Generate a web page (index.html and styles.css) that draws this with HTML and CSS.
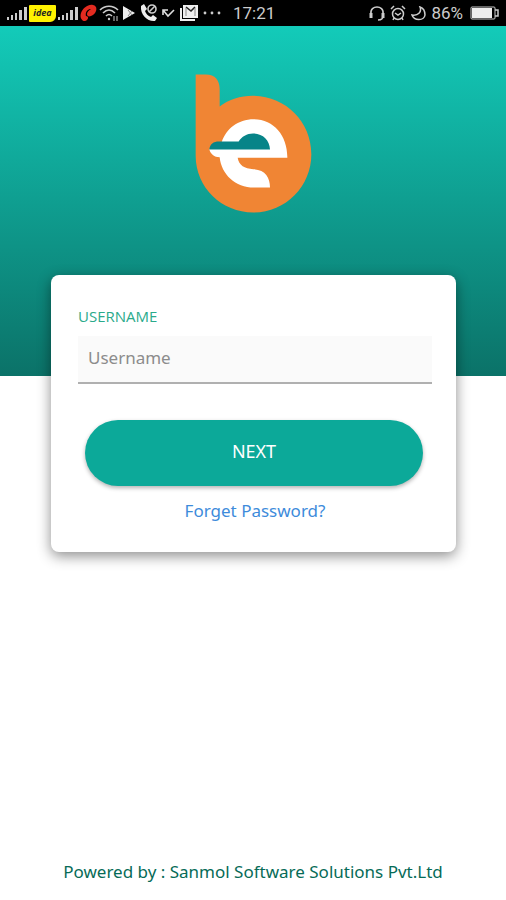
FILE: index.html
```html
<!DOCTYPE html>
<html lang="en">
<head>
<meta charset="utf-8">
<meta name="viewport" content="width=device-width, initial-scale=1">
<title>Login</title>
<link rel="stylesheet" href="styles.css">
</head>
<body>
<div class="status">
  <div class="status-group">
    <svg width="20" height="14" viewBox="0 0 20 14" fill="#ccc"><path d="M0 11h2v3H0zM4 9h2v5H4zM8 7h2v7H8zM12 4h3v10h-3zM17 1h3v13h-3z"/></svg>
    <span class="carrier">idea</span>
    <svg width="20" height="14" viewBox="0 0 20 14" fill="#ccc"><path d="M0 11h2v3H0zM4 9h2v5H4zM8 7h2v7H8zM12 4h3v10h-3zM17 1h3v13h-3z"/></svg>
    <svg width="17" height="18" viewBox="0 0 17 18"><path d="M1 9C3 4 8 0 13 1c5 1 4 7 0 10-3 2-6 2-6-1 0-2 2-4 4-5-4 0-6 4-5 7 2 0 3 2 1 4-3 3-8-1-6-7z" fill="#e42b20"/></svg>
    <svg width="20" height="18" viewBox="0 0 20 18" fill="none" stroke="#ccc" stroke-width="1.6"><path d="M1 6c5-5 13-5 18 0M4 9c4-4 8-4 12 0M7 12c2-2 4-2 6 0"/><circle cx="10" cy="15" r="1.2" fill="#ccc" stroke="none"/><path d="M15 12v5M18 17v-5" stroke-width="1"/></svg>
    <svg class="play" width="14" height="14" viewBox="0 0 14 14"><path d="M1 0l12 7-12 7z" fill="#eee"/><path d="M6 4l4 5M10 5l-4 5" stroke="#888"/></svg>
    <svg class="call" width="18" height="18" viewBox="0 0 18 18" fill="none"><path d="M1 2l3-2 3 5-2 2c1 3 3 5 6 6l2-2 4 3-2 3C8 18 0 11 1 2z" fill="#eee"/><circle cx="12" cy="5" r="4" stroke="#ccc" stroke-width="1.6"/><path d="M9 8l6-6" stroke="#ccc" stroke-width="1.6"/></svg>
    <svg class="missed" width="13" height="10" viewBox="0 0 13 10" fill="none" stroke="#ddd" stroke-width="1.6"><path d="M1 7V2h5M1 2l5 6 6-6"/></svg>
    <svg class="mail" width="18" height="16" viewBox="0 0 18 16" fill="none"><path d="M1 3v12h14" stroke="#eee" stroke-width="2"/><path d="M3 0h15v13H3z" fill="#eee"/><path d="M6 2l5 4 4-4" stroke="#222" stroke-width="1.6"/><path d="M6 3v8M15 3v8" stroke="#888"/></svg>
    <svg width="18" height="4" viewBox="0 0 18 4" fill="#ccc"><circle cx="2" cy="2" r="1.4"/><circle cx="9" cy="2" r="1.4"/><circle cx="16" cy="2" r="1.4"/></svg>
    <span class="clock">17:21</span>
  </div>
  <div class="status-group status-right">
    <svg width="16" height="15" viewBox="0 0 16 15" fill="none" stroke="#ccc" stroke-width="1.5"><path d="M2 8C1 3 5 1 8 1s7 2 6 7M14 10c0 3-2 4-5 4"/><path d="M2 7v5M14 7v5" stroke-width="3"/></svg>
    <svg width="16" height="16" viewBox="0 0 16 16" fill="none" stroke="#ccc" stroke-width="1.5"><circle cx="8" cy="9" r="5.5"/><path d="M1 4l3-3M15 4l-3-3M5 8l3 2 3-2M4 13l-1 2M12 13l1 2"/></svg>
    <svg width="15" height="15" viewBox="0 0 15 15" fill="none" stroke="#ccc" stroke-width="1.5"><path d="M9 1c2 5-2 9-8 8 2 6 12 6 13 0 0-4-2-7-5-8z"/></svg>
    <span class="percent">86%</span>
    <svg width="29" height="14" viewBox="0 0 29 14" fill="none"><rect x="1" y="1" width="24" height="12" rx="1" stroke="#ccc"/><path d="M2 2h20v10H2z" fill="#eee"/><path d="M25 4h3v6h-3" stroke="#ccc" stroke-width="1.5"/></svg>
  </div>
</div>
<header class="hero">
  <svg class="logo" viewBox="46 44 348 416" role="img" aria-label="be">
    <path d="M48 45h30c29 0 42 18 42 44v52c28-21 62-32 99-32 98 0 176 78 176 175s-78 175-174 175c-95 0-173-74-173-170z" fill="#f08534"/>
    <path d="M126 248c13-40 49-69 96-69 61 0 102 50 101 116H174c4 23 20 33 47 34 36 2 50 25 50 55h-48c-56 0-98-40-103-91-16 0-28-10-31-24z" fill="#fff"/>
    <path d="M89 270c2-16 12-24 29-24h59c9-15 25-24 43-24 29 0 50 20 51 48z" fill="#078488"/>
  </svg>
</header>
<main class="page">
  <form class="card">
    <label class="label" for="username">USERNAME</label>
    <input class="field" id="username" type="text" placeholder="Username">
    <button class="next" type="button">NEXT</button>
    <a class="forgot" href="#">Forget Password?</a>
  </form>
</main>
<footer class="footer">Powered by : Sanmol Software Solutions Pvt.Ltd</footer>
</body>
</html>
```
FILE: styles.css
```css
* {
  box-sizing: border-box;
}

body {
  margin: 0;
  min-height: 100vh;
  display: flex;
  flex-direction: column;
  background: #fff;
  font-family: "Noto Sans", "Open Sans", sans-serif;
}

.status {
  display: flex;
  justify-content: space-between;
  align-items: center;
  height: 26px;
  padding: 0 7px;
  background: #000;
  color: #ccc;
  font-family: Roboto, sans-serif;
  font-size: 17px;
}

.status-group {
  display: flex;
  align-items: center;
  gap: 2px;
}

.status-right {
  gap: 5px;
}

.carrier {
  width: 27px;
  height: 17px;
  background: #fff200;
  border-radius: 1px 1px 6px 1px;
  color: #222;
  font: italic bold 9px/16px "Open Sans", sans-serif;
  text-align: center;
}

.play {
  margin-left: 1px;
}

.call {
  margin-left: 2px;
}

.missed {
  margin-left: 2px;
}

.mail {
  margin: 0 3px;
}

.clock {
  margin-left: 10px;
}

.percent {
  margin-right: 2px;
}

.hero {
  display: flex;
  justify-content: center;
  align-items: flex-start;
  height: 350px;
  padding-top: 48px;
  background: linear-gradient(#13cbb9, #0b7268);
}

.logo {
  width: 116px;
  height: 139px;
  overflow: visible;
}

.page {
  margin: -101px 50px 0 51px;
}

.card {
  display: flex;
  flex-direction: column;
  padding: 31px 24px 29px 27px;
  background: #fff;
  border-radius: 8px;
  box-shadow: 0 4px 14px rgba(0, 0, 0, 0.45);
}

.label {
  color: #2aaa8b;
  font-family: "Open Sans", sans-serif;
  font-size: 15px;
  line-height: 20px;
}

.field {
  width: 100%;
  height: 48px;
  margin-top: 10px;
  padding: 0 10px 3px;
  border: 0;
  border-bottom: 2px solid #b0b0b0;
  background: #fafafa;
  color: #555;
  font-family: inherit;
  font-size: 17px;
}

.field::placeholder {
  color: #8c8c8c;
  opacity: 1;
}

.next {
  height: 66px;
  margin: 36px 9px 0 7px;
  padding: 0 0 4px;
  border: 0;
  border-radius: 33px;
  background: #0ca999;
  box-shadow: 0 2px 4px rgba(0, 0, 0, 0.3);
  color: #fff;
  font-family: inherit;
  font-size: 18px;
}

.forgot {
  align-self: center;
  margin-top: 13px;
  color: #3d8bdb;
  font-size: 17px;
  line-height: 24px;
  text-decoration: none;
}

.footer {
  margin-top: auto;
  padding-bottom: 16px;
  color: #066b57;
  font-size: 17px;
  line-height: 24px;
  text-align: center;
}
```
